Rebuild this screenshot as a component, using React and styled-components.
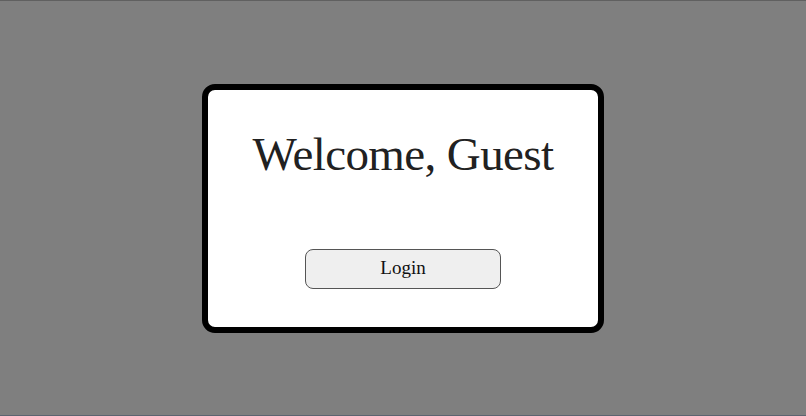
import React from "react";
import styled, { createGlobalStyle } from "styled-components";

const GlobalStyle = createGlobalStyle`
  html, body {
    margin: 0;
    padding: 0;
    height: 100%;
  }
  body {
    font-family: "Liberation Serif", "DejaVu Serif", serif;
    background: #ffffff;
  }
`;

const Overlay = styled.div`
  position: fixed;
  inset: 0;
  box-sizing: border-box;
  border-top: 1px solid #606060;
  border-bottom: 1px solid #5c6470;
  background-color: rgba(0, 0, 0, 0.5);
  display: flex;
  align-items: center;
  justify-content: center;
`;

const Card = styled.div`
  box-sizing: border-box;
  width: 402px;
  height: 249px;
  margin-top: 1px;
  background: #ffffff;
  border: 6px solid #000000;
  border-radius: 13px;
  display: flex;
  flex-direction: column;
  align-items: center;
  padding: 36px 0 38px;
`;

const Title = styled.h1`
  margin: 0;
  font-family: "Liberation Serif", "DejaVu Serif", serif;
  font-weight: 400;
  font-size: 47px;
  line-height: 56px;
  letter-spacing: -0.6px;
  color: #212121;
`;

const LoginButton = styled.button`
  margin-top: auto;
  box-sizing: border-box;
  width: 196px;
  height: 40px;
  padding: 0 0 3px;
  background: #efefef;
  border: 1px solid #555555;
  border-radius: 8px;
  font-family: "Liberation Serif", "DejaVu Serif", serif;
  font-size: 19px;
  color: #111111;
  cursor: pointer;
`;

const App = () => {
  return (
    <>
      <GlobalStyle />
      <Overlay>
        <Card>
          <Title>Welcome, Guest</Title>
          <LoginButton>Login</LoginButton>
        </Card>
      </Overlay>
    </>
  );
};

export default App;
